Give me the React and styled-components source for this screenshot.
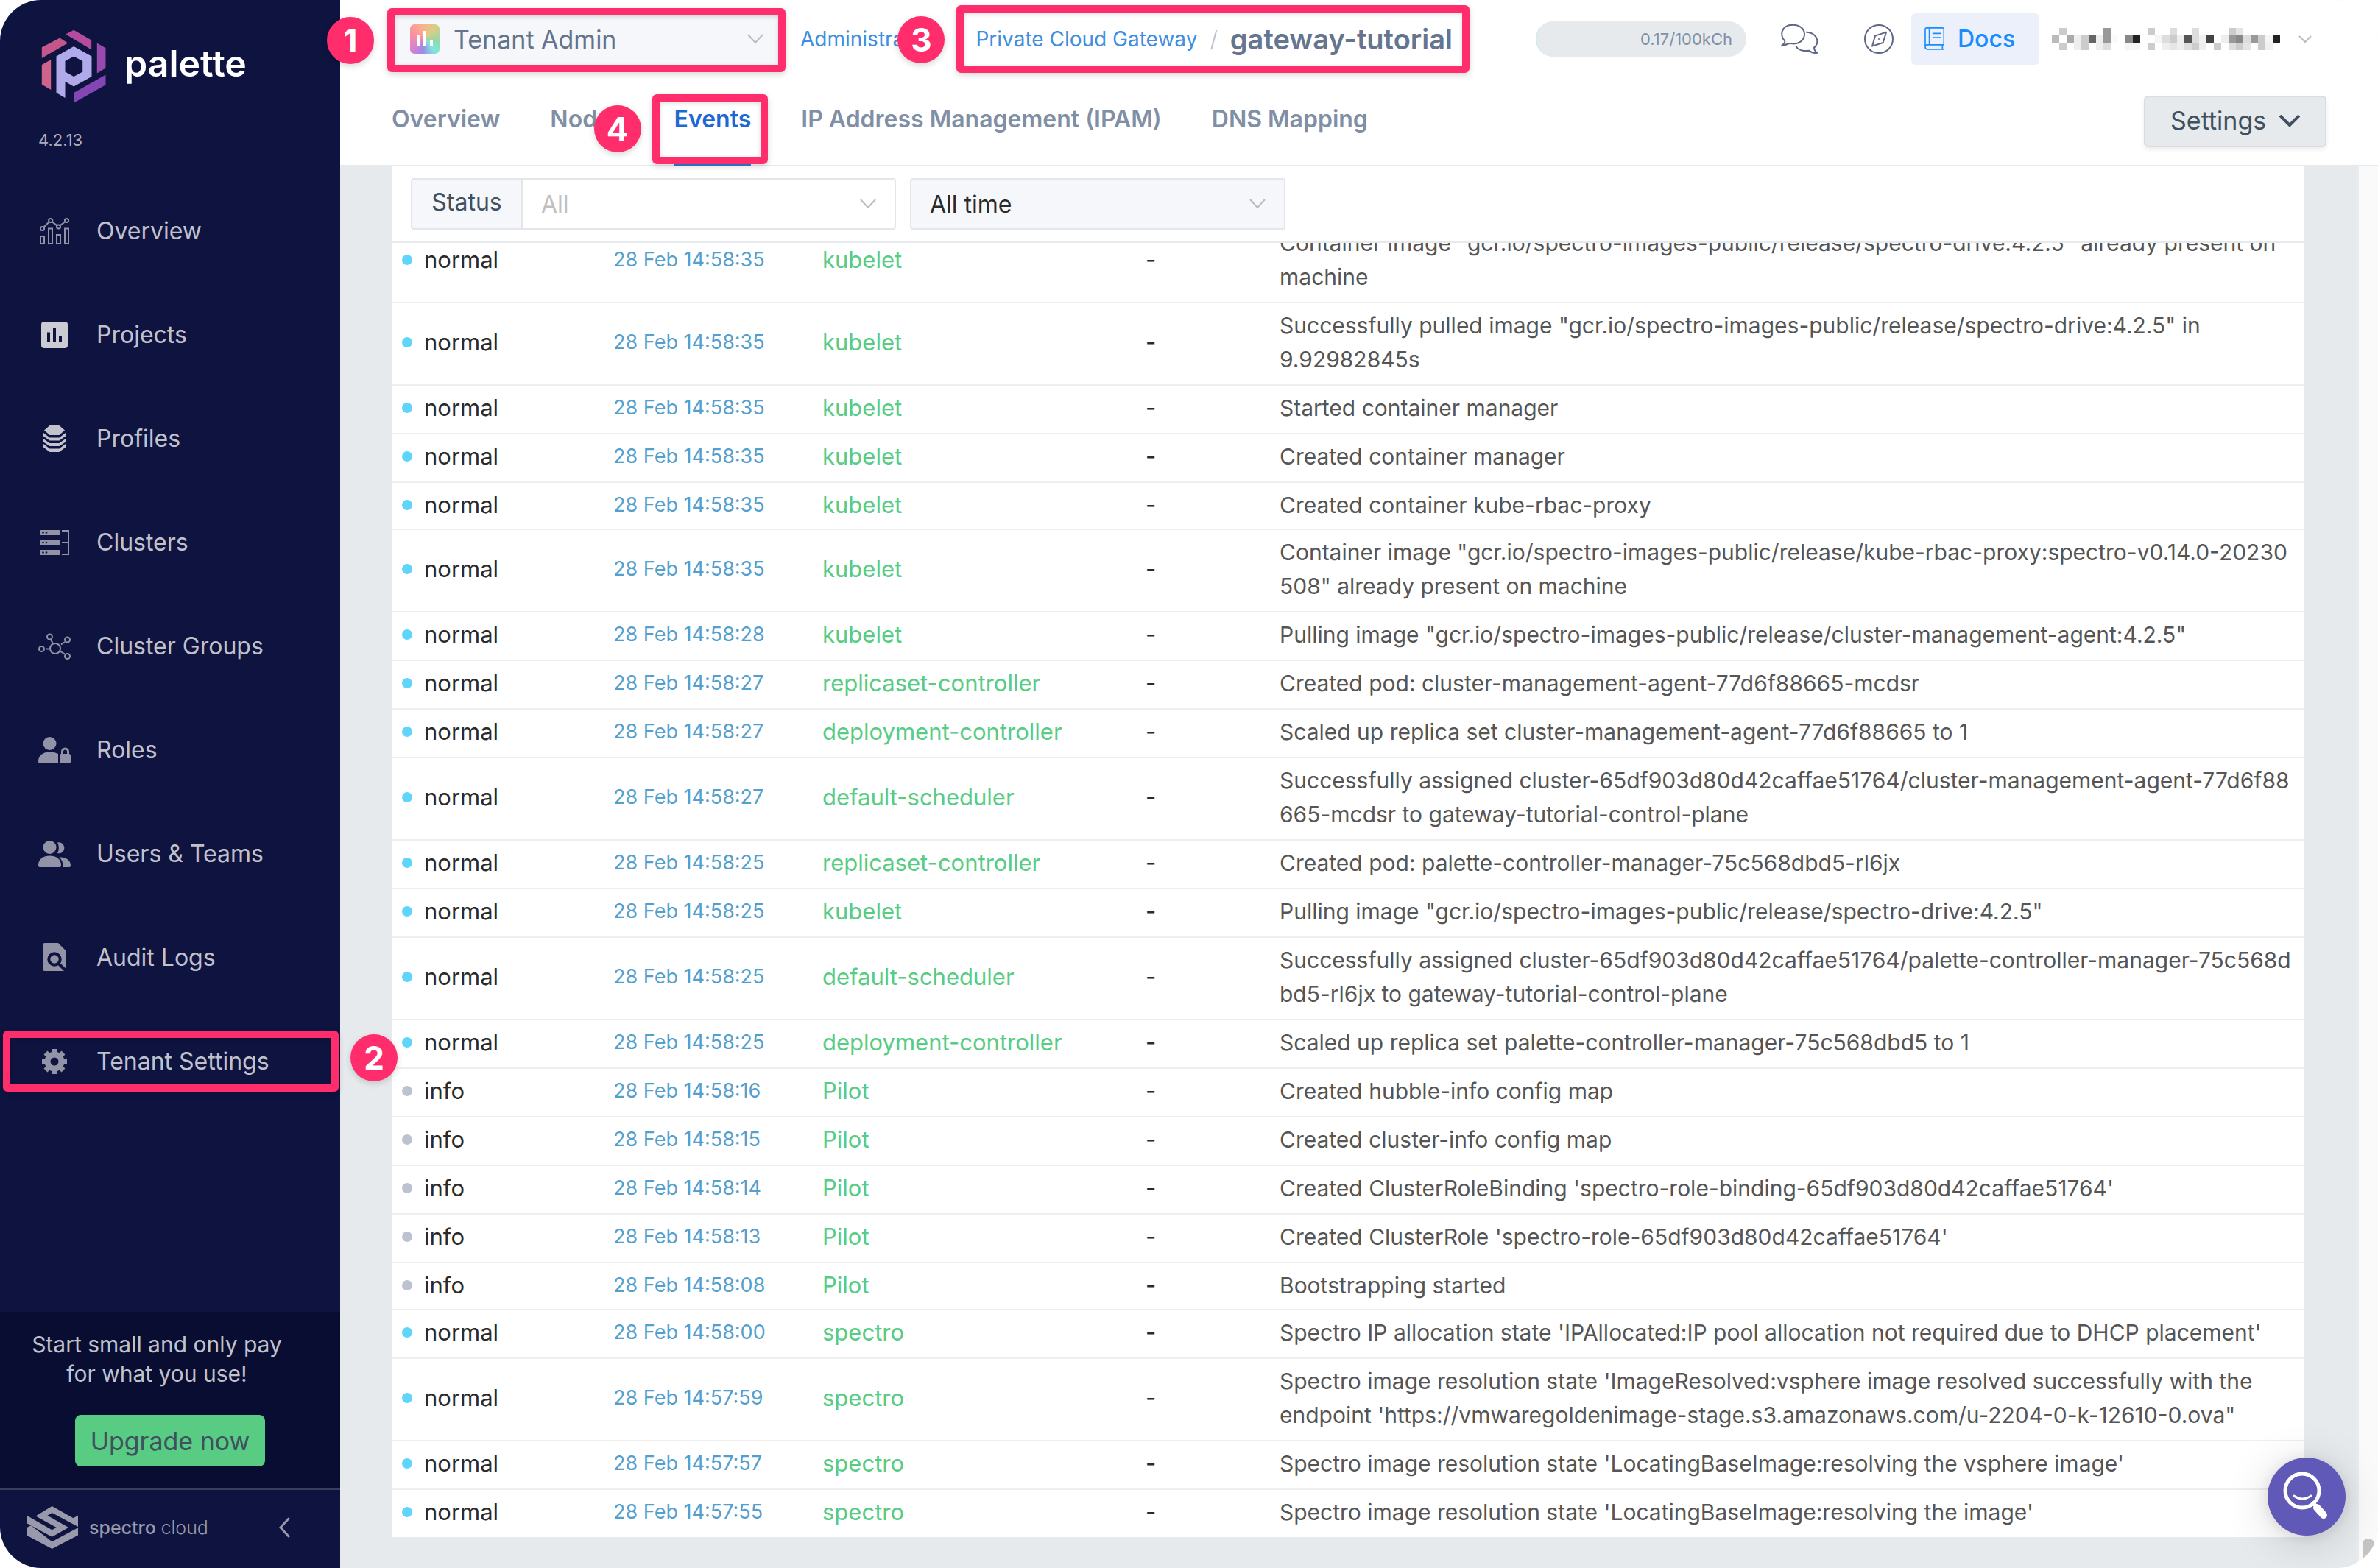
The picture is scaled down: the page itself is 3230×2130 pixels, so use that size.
import React from "react";
import styled, { createGlobalStyle, css } from "styled-components";

const color = {
  navy: "#0e1340",
  navyDark: "#090d31",
  canvas: "#e6eaed",
  line: "#e6eaed",
  rowLine: "#efefef",
  link: "#3f8ee0",
  pink: "#ff2d6b",
  muted: "#808fa5",
  field: "#f6f7fa",
};

const Global = createGlobalStyle`
  *, *::before, *::after { box-sizing: border-box; }
  body { margin: 0; background: #fff; font-family: Inter, "Open Sans", sans-serif; }
  button, select { font-family: inherit; }
  a { text-decoration: none; }
  svg { display: block; flex: none; }
`;

const Shell = styled.div`
  display: flex;
  min-height: 100vh;
  border-radius: 56px;
  overflow: hidden;
  background: ${color.canvas};
`;

/* ---------- annotations ---------- */

const Frame = styled.span`
  position: absolute;
  inset: ${(p) => p.$inset};
  border: 10px solid ${color.pink};
  border-radius: 6px;
  box-shadow: 0 3px 8px rgba(0, 0, 0, 0.16), inset 0 2px 6px rgba(0, 0, 0, 0.14);
  pointer-events: none;
  z-index: 2;
`;

const Badge = styled.span`
  position: absolute;
  top: ${(p) => p.$top};
  left: ${(p) => p.$left};
  width: 64px;
  height: 64px;
  border-radius: 50%;
  background: ${color.pink};
  color: #fff;
  font-size: 44px;
  font-weight: 700;
  line-height: 64px;
  text-align: center;
  box-shadow: 0 3px 8px rgba(0, 0, 0, 0.16);
  z-index: 3;
`;

/* ---------- sidebar ---------- */

const Sidebar = styled.aside`
  position: relative;
  z-index: 1;
  display: flex;
  flex-direction: column;
  flex: none;
  width: 462px;
  background: ${color.navy};
`;

const Brand = styled.div`
  display: flex;
  align-items: flex-start;
  gap: 25px;
  padding: 40px 0 0 56px;
  color: #fff;
  font-size: 50px;
  font-weight: 600;
  line-height: 92px;
`;

const Version = styled.div`
  padding: 30px 0 0 52px;
  color: #aeaebb;
  font-size: 22px;
  line-height: 40px;
`;

const Nav = styled.nav`
  display: flex;
  flex-direction: column;
  padding-top: 33px;
`;

const NavItem = styled.a`
  position: relative;
  display: flex;
  align-items: center;
  gap: 35px;
  height: 141px;
  padding-left: 52px;
  color: #c1c1cc;
  font-size: 32px;
`;

const Promo = styled.div`
  display: flex;
  flex-direction: column;
  align-items: center;
  margin-top: auto;
  padding: 24px 0 30px;
  background: ${color.navyDark};
  color: #c0c2cc;
`;

const PromoText = styled.p`
  margin: 0 36px 36px 0;
  font-size: 30px;
  line-height: 40px;
  text-align: center;
`;

const UpgradeButton = styled.button`
  width: 258px;
  height: 70px;
  padding: 0;
  border: 0;
  border-radius: 8px;
  background: #57cc82;
  color: #40505f;
  font-size: 34px;
`;

const SidebarFoot = styled.div`
  display: flex;
  align-items: center;
  height: 108px;
  padding: 0 68px 4px 36px;
  border-top: 2px solid #3c3e60;
  color: #9899ab;
  font-size: 25px;
`;

const FootName = styled.span`
  margin-left: 15px;
  font-weight: 500;
  span {
    font-weight: 300;
  }
`;

const IconButton = styled.button`
  display: flex;
  padding: 0;
  border: 0;
  background: none;
  color: inherit;
  margin-left: ${(p) => p.$push || "0"};
`;

/* ---------- page ---------- */

const Page = styled.div`
  display: flex;
  flex-direction: column;
  flex: 1;
  min-width: 0;
`;

const Header = styled.header`
  border-bottom: 2px solid ${color.line};
  background: #fff;
`;

const TopRow = styled.div`
  display: flex;
  align-items: center;
  height: 106px;
  padding: 0 70px;
`;

const Field = styled.label`
  position: relative;
  display: flex;
  align-items: center;
  width: ${(p) => p.$width};
  height: 70px;
  padding: 0 25px;
  border: ${(p) => (p.$flat ? "0" : "2px solid #e3e7ea")};
  border-radius: ${(p) => (p.$joined ? "0 4px 4px 0" : "4px")};
  border-left-width: ${(p) => (p.$joined ? "0" : "")};
  background: ${(p) => (p.$filled ? color.field : "#fff")};
`;

const Select = styled.select`
  flex: 1;
  min-width: 0;
  height: 100%;
  padding: 0 0 0 ${(p) => p.$indent || "0"};
  border: 0;
  outline: 0;
  background: none;
  appearance: none;
  color: ${(p) => p.$color};
  font-size: ${(p) => p.$size || "32px"};
`;

const TenantMark = styled.span`
  width: 40px;
  height: 40px;
  border-radius: 6px;
  background: conic-gradient(
    #f3b98c, #d6cf85 45deg, #93d8ac 100deg, #80e6dd 140deg,
    #9a8ae8 190deg, #d583cf 230deg, #f98fa5 290deg, #ff9f95 320deg, #f3b98c
  );
`;

const Crumbs = styled.nav`
  display: flex;
  align-items: center;
  gap: 17px;
  margin-left: 25px;
  color: #b9bfca;
  font-size: 30px;
  font-weight: 300;
`;

const CrumbLink = styled.a`
  width: ${(p) => p.$width || "auto"};
  color: ${color.link};
  font-size: 28px;
  font-weight: 400;
`;

const CrumbGroup = styled.span`
  position: relative;
  display: flex;
  align-items: center;
  gap: 17px;
`;

const CrumbHere = styled.h1`
  margin: 0;
  color: #65758f;
  font-size: 38px;
  font-weight: 600;
  line-height: 64px;
`;

const Tools = styled.div`
  display: flex;
  align-items: center;
  margin-left: auto;
  padding-right: 20px;
  color: #5f6685;
`;

const Usage = styled.div`
  width: 286px;
  height: 48px;
  margin-right: 46px;
  padding-right: 19px;
  border-radius: 24px;
  border-left: 1px solid #b9ecd8;
  background: ${color.canvas};
  color: ${color.muted};
  font-size: 22px;
  line-height: 48px;
  text-align: right;
`;

const DocsLink = styled.a`
  display: flex;
  align-items: center;
  gap: 18px;
  width: 174px;
  height: 70px;
  margin: 0 17px 0 24px;
  padding: 0 0 2px 18px;
  border-radius: 6px;
  background: #ecf0fa;
  color: #1a8cff;
  font-size: 32px;
  font-weight: 500;
`;

const TabRow = styled.div`
  display: flex;
  justify-content: space-between;
  padding: 24px 70px 0;
`;

const Tabs = styled.nav`
  display: flex;
  gap: 68px;
`;

const Tab = styled.a`
  position: relative;
  height: 94px;
  color: ${(p) => (p.$active ? "#1d68d4" : color.muted)};
  font-size: 32px;
  font-weight: 600;
  line-height: 64px;
  ${(p) =>
    p.$active &&
    css`
      &::after {
        content: "";
        position: absolute;
        inset: auto 0 -2px;
        height: 4px;
        background: #2b7de0;
      }
    `}
`;

const SettingsButton = styled.button`
  display: flex;
  align-items: center;
  justify-content: space-between;
  width: 248px;
  height: 70px;
  padding: 0 34px 3px;
  border: 2px solid #d9dde1;
  border-radius: 6px;
  background: ${color.canvas};
  box-shadow: 0 3px 6px rgba(0, 0, 0, 0.08);
  color: #40505f;
  font-size: 34px;
`;

const Body = styled.div`
  display: flex;
  flex: 1;
`;

const Content = styled.main`
  flex: 1;
  min-width: 0;
  padding: 0 72px 42px 70px;
`;

const Track = styled.div`
  display: flex;
  flex-direction: column;
  align-items: center;
  justify-content: flex-end;
  width: 28px;
  border-left: 2px solid #ececec;
  background: #fafafa;
`;

const Thumb = styled.div`
  width: 16px;
  height: 40px;
  border-radius: 8px 8px 0 0;
  background: #c4c4c4;
`;

const Card = styled.section`
  background: #fff;
`;

const Filters = styled.div`
  display: flex;
  gap: 19px;
  padding: 16px 26px;
  border-bottom: 2px solid ${color.line};
`;

const FieldGroup = styled.div`
  display: flex;
`;

const Addon = styled.label`
  width: 152px;
  height: 70px;
  border: 2px solid #e3e7ea;
  border-radius: 4px 0 0 4px;
  background: ${color.field};
  color: #40505f;
  font-size: 32px;
  line-height: 62px;
  text-align: center;
`;

const Scroller = styled.div`
  overflow: hidden;
`;

const Table = styled.table`
  width: 100%;
  margin-top: -30px;
  border-collapse: separate;
  border-spacing: 0;
  table-layout: fixed;
`;

const Col = styled.col`
  width: ${(p) => p.$width};
`;

const Cell = styled.td`
  padding: 7px 0 ${(p) => (p.$short ? "9px" : "11px")} 16px;
  border-bottom: ${(p) => (p.$last ? "0" : `2px solid ${color.rowLine}`)};
  color: ${(p) => p.$color};
  font-size: ${(p) => p.$size || "31px"};
  line-height: 46px;
  vertical-align: middle;
  white-space: nowrap;
`;

const Status = styled.span`
  display: flex;
  align-items: center;
  gap: 16px;
  margin-left: -2px;
  &::before {
    content: "";
    width: 14px;
    height: 14px;
    border-radius: 50%;
    background: ${(p) => (p.$info ? "#bcc2cf" : "#5fd5fb")};
  }
`;

const HelpButton = styled.button`
  position: fixed;
  right: 44px;
  bottom: 44px;
  width: 106px;
  height: 106px;
  padding: 0;
  border: 0;
  border-radius: 50%;
  background: #6059b7;
  box-shadow: 0 8px 60px rgba(0, 0, 0, 0.16), 0 2px 20px rgba(0, 0, 0, 0.1);
`;

/* ---------- drawings ---------- */

const Chevron = ({ w = 22, h = 14, stroke = "#b8bcc2", sw = 2 }) => (
  <svg width={w} height={h} viewBox={`0 0 ${w} ${h}`} fill="none" stroke={stroke} strokeWidth={sw}>
    <path d={`M1 1 L${w / 2} ${h - 2} L${w - 1} 1`} />
  </svg>
);

const PaletteLogo = () => (
  <svg width="88" height="100" viewBox="56.5 39.5 88 100">
    <path fill="#c4568c" d="M57.3 63.8 81.7 51 92.7 58 57.3 78.6Z" />
    <path fill="#cf648b" d="M57.3 87.5 69.7 80.4V121.4L57.3 114.3Z" />
    <path fill="#b34b9f" d="M89.7 46 100.7 40.2 124.7 54V67Z" />
    <path fill="#984bae" d="M132.3 58 144 64.7V92L132.3 99Z" />
    <path fill="#8445b5" d="M100.7 125.4 144 101V114.7L100.7 139.3Z" />
    <path
      fill="#b0aaea"
      fillRule="evenodd"
      d="M77 76 100.7 62.5 125 76V103.6L100.7 117 89 110.3V132.6L77 125.4ZM89 82.6V97L100.7 103.6 112.7 97V82.6L100.7 76Z"
    />
  </svg>
);

const SpectroLogo = () => (
  <svg width="70" height="58" viewBox="101 926 196 172" preserveAspectRatio="none" fill="currentColor">
    <path d="M136 966 198 926 279 974 297 963V1009L198 953 181 964 261 1012 198 1050 101 994V963L198 1022 215 1012Z" />
    <path d="M101 1013 118 1004 198 1069 297 1013V1043L198 1098 101 1043Z" />
  </svg>
);

const iconPaths = {
  overview: (
    <g fill="none" stroke="#9293a6" strokeWidth="2">
      <path d="M3 29h5v10H3zM14 18.500h5V39h-5zM25 27h5v12h-5zM36 18.500h5V39h-5z" />
      <circle cx="5.500" cy="18.500" r="2.600" />
      <circle cx="16.700" cy="7.500" r="2.600" />
      <circle cx="27.500" cy="16" r="2.600" />
      <circle cx="38.500" cy="7.500" r="2.600" />
      <path d="M7.500 16.500 14.700 9.500M18.700 9.200 25.500 14.400M29.600 14.300 36.300 9.200" />
    </g>
  ),
  projects: (
    <>
      <rect x="4" y="4" width="36" height="36" rx="4" fill="#cbcbd4" />
      <path fill={color.navy} d="M12 18.500h4V32h-4zM20 12.500h4V32h-4zM28 24h4v8h-4z" />
    </>
  ),
  profiles: (
    <g fill="#c3c3cd">
      <path d="M15.500 4h13l7.500 6.500-7.500 6.500h-13L8 10.500z" />
      <path d="M7 14l8.500 6.500h13L37 14v4.500L28.500 24.500h-13L7 18.500z" />
      <path d="M7 22l8.500 6h13L37 22v4.500L28.500 32h-13L7 26.500z" />
      <path d="M7 29l8.500 6.500h13L37 29v4.500L28.500 40h-13L7 33.500z" />
    </g>
  ),
  clusters: (
    <>
      <g fill="#9293a6">
        <rect x="2" y="5" width="28" height="7" rx="1.500" />
        <rect x="2" y="18.500" width="28" height="7" rx="1.500" />
        <rect x="2" y="32" width="28" height="7" rx="1.500" />
      </g>
      <path fill="none" stroke="#9293a6" strokeWidth="2" d="M32 6h9v32h-9M32 22h9" />
      <g fill={color.navy}>
        {[8.5, 22, 35.5].map((y) => (
          <React.Fragment key={y}>
            <circle cx="6.500" cy={y} r="1.300" />
            <circle cx="11" cy={y} r="1.300" />
          </React.Fragment>
        ))}
      </g>
    </>
  ),
  groups: (
    <g fill="none" stroke="#9293a6" strokeWidth="2">
      <circle cx="23" cy="25" r="7" />
      <circle cx="4.500" cy="25.500" r="3.500" />
      <circle cx="15.500" cy="9" r="3.500" />
      <circle cx="39.500" cy="13" r="3.500" />
      <circle cx="39.500" cy="35.500" r="3.500" />
      <path d="M10 25.500h5M17 12.500l2.800 6M31 19.500l5-3.500M29.300 28.500l6.700 4" />
    </g>
  ),
  roles: (
    <g fill="#9293a6">
      <circle cx="15.500" cy="13" r="9" />
      <path d="M0 37c0-8 7-12.500 15.500-12.500 4.500 0 8 .8 11.500 2.500v13H2q-2 0-2-3z" />
      <path
        fillRule="evenodd"
        d="M31 27v-3a5.500 5.500 0 0 1 11 0v3q2 .3 2 2v9q0 2-2 2H31q-2 0-2-2v-9q0-1.700 2-2zM34 27h5v-3a2.500 2.500 0 0 0-5 0z"
      />
    </g>
  ),
  users: (
    <g fill="#9293a6">
      <circle cx="15.500" cy="13" r="9" />
      <path d="M26 6.500a7.500 7.500 0 1 1 0 14.500c2.500-4.500 2.500-10 0-14.500z" />
      <path d="M0 37c0-8 7-12.500 15.500-12.500S31 29 31 37q0 3-2 3H2q-2 0-2-3z" />
      <path d="M28.500 26.500C38 25.500 44 31 44 37.500q0 2.500-2 2.500h-9c1-6-1-10-4.500-13.500z" />
    </g>
  ),
  audit: (
    <>
      <path fill="#9293a6" d="M9 2h18l11 11v25l0 2H9q-3 0-3-3V5q0-3 3-3z" />
      <circle cx="22" cy="24" r="7.700" fill="none" stroke={color.navy} strokeWidth="4" />
      <path stroke={color.navy} strokeWidth="4" d="M27 29.500 39 41" />
    </>
  ),
  settings: (
    <g fill="none" stroke="#9293a6">
      <circle cx="22" cy="22" r="9.500" strokeWidth="8" />
      <path strokeWidth="7" d="M22 5v6M22 33v6M5 22h6M33 22h6M10 10l4.500 4.500M29.500 29.500 34 34M34 10l-4.500 4.500M14.500 29.500 10 34" />
    </g>
  ),
};

const NavIcon = ({ name }) => (
  <svg width="44" height="44" viewBox="0 0 44 44" aria-hidden="true">
    {iconPaths[name]}
  </svg>
);

const ChatIcon = () => (
  <svg width="52" height="42" viewBox="50 93 156 126" fill="none" stroke="currentColor" strokeWidth="6" strokeLinejoin="round">
    <path d="M56 183C66 176 72 170 68 163 50 148 48 98 102 98 130 98 149 115 149 136 149 160 128 177 102 175 95 174 85 173 80 176 72 182 62 183 56 183Z" />
    <path d="M156 128C185 128 201 148 201 165 201 175 196 185 188 191 188 200 192 206 201 212 190 214 178 212 168 203 140 207 122 198 114 185" />
  </svg>
);

const CompassIcon = () => (
  <svg width="40" height="40" viewBox="395 95 120 120" fill="none" stroke="currentColor" strokeWidth="6" strokeLinejoin="round">
    <circle cx="455" cy="155" r="57" />
    <path d="M440 142 485 127 472 170 428 184Z" />
    <circle cx="455" cy="155" r="3" fill="currentColor" stroke="none" />
  </svg>
);

const BookIcon = () => (
  <svg width="27" height="31" viewBox="641 114 82 93" fill="none" stroke="currentColor" strokeWidth="5">
    <path d="M644 196V122q0-6 6-6h65q6 0 6 6V186H652q-8 0-8 9t8 9h70M661 116v70M674 139h34M674 156h34M715 186v17" />
  </svg>
);

const TenantBars = () => (
  <svg width="40" height="40" viewBox="0 0 40 40" fill="#fff">
    <rect x="9" y="15" width="4" height="15" />
    <rect x="18" y="9" width="4" height="21" />
    <rect x="27" y="22" width="4" height="8" />
  </svg>
);

const maskRows = [
  { 1: "#ccc", 7: "#999", 13: "#ccc", 16: "#ddd", 19: "#ddd", 24: "#ccc", 25: "#e4e4e4" },
  {
    0: "#bbb", 2: "#aaa", 3: "#eee", 4: "#ccc", 5: "#666", 6: "#eee", 7: "#999", 8: "#fafafa", 10: "#888", 11: "#222",
    14: "#f5f5f5", 15: "#ddd", 16: "#ccc", 17: "#eee", 18: "#555", 19: "#ddd", 20: "#f0f0f0", 21: "#444", 23: "#eee",
    24: "#999", 25: "#888", 26: "#ddd", 27: "#999", 28: "#ccc", 29: "#f5f5f5", 30: "#222",
  },
  {
    1: "#ccc", 3: "#eee", 4: "#ccc", 6: "#eee", 7: "#ddd", 10: "#f5f5f5", 11: "#f5f5f5", 13: "#ccc", 15: "#eee",
    16: "#e6e6e6", 17: "#eee", 18: "#ddd", 19: "#ccc", 20: "#eee", 22: "#ccc", 24: "#ddd", 25: "#ccc", 26: "#e4e4e4",
    28: "#ccc", 29: "#f0f0f0",
  },
];

const MaskedName = () => (
  <svg width="310" height="30" viewBox="0 0 310 30" role="img" aria-label="Account" shapeRendering="crispEdges">
    {maskRows.map((row, y) =>
      Object.entries(row).map(([x, fill]) => (
        <rect key={`${x}-${y}`} x={x * 10} y={y * 10} width="10" height="10" fill={fill} />
      ))
    )}
  </svg>
);

const HelpIcon = () => (
  <svg width="106" height="106" viewBox="0 0 106 106" fill="none" stroke="#fff" strokeLinecap="round">
    <circle cx="47" cy="45" r="23" strokeWidth="5" />
    <path strokeWidth="3" d="M36 52q11 8 23 0" />
    <path strokeWidth="5" d="M62 62l4 4" />
    <path strokeWidth="10" d="M67 68l9 10" />
  </svg>
);

/* ---------- data ---------- */

const navItems = [
  ["overview", "Overview"],
  ["projects", "Projects"],
  ["profiles", "Profiles"],
  ["clusters", "Clusters"],
  ["groups", "Cluster Groups"],
  ["roles", "Roles"],
  ["users", "Users & Teams"],
  ["audit", "Audit Logs"],
  ["settings", "Tenant Settings"],
];

const events = [
  ["normal", "14:58:35", "kubelet", ['Container image "gcr.io/spectro-images-public/release/spectro-drive:4.2.5" already present on', "machine"]],
  ["normal", "14:58:35", "kubelet", ['Successfully pulled image "gcr.io/spectro-images-public/release/spectro-drive:4.2.5" in', "9.92982845s"]],
  ["normal", "14:58:35", "kubelet", ["Started container manager"]],
  ["normal", "14:58:35", "kubelet", ["Created container manager"]],
  ["normal", "14:58:35", "kubelet", ["Created container kube-rbac-proxy"], true],
  ["normal", "14:58:35", "kubelet", ['Container image "gcr.io/spectro-images-public/release/kube-rbac-proxy:spectro-v0.14.0-20230', '508" already present on machine']],
  ["normal", "14:58:28", "kubelet", ['Pulling image "gcr.io/spectro-images-public/release/cluster-management-agent:4.2.5"']],
  ["normal", "14:58:27", "replicaset-controller", ["Created pod: cluster-management-agent-77d6f88665-mcdsr"]],
  ["normal", "14:58:27", "deployment-controller", ["Scaled up replica set cluster-management-agent-77d6f88665 to 1"]],
  ["normal", "14:58:27", "default-scheduler", ["Successfully assigned cluster-65df903d80d42caffae51764/cluster-management-agent-77d6f88", "665-mcdsr to gateway-tutorial-control-plane"]],
  ["normal", "14:58:25", "replicaset-controller", ["Created pod: palette-controller-manager-75c568dbd5-rl6jx"]],
  ["normal", "14:58:25", "kubelet", ['Pulling image "gcr.io/spectro-images-public/release/spectro-drive:4.2.5"']],
  ["normal", "14:58:25", "default-scheduler", ["Successfully assigned cluster-65df903d80d42caffae51764/palette-controller-manager-75c568d", "bd5-rl6jx to gateway-tutorial-control-plane"]],
  ["normal", "14:58:25", "deployment-controller", ["Scaled up replica set palette-controller-manager-75c568dbd5 to 1"]],
  ["info", "14:58:16", "Pilot", ["Created hubble-info config map"]],
  ["info", "14:58:15", "Pilot", ["Created cluster-info config map"]],
  ["info", "14:58:14", "Pilot", ["Created ClusterRoleBinding 'spectro-role-binding-65df903d80d42caffae51764'"]],
  ["info", "14:58:13", "Pilot", ["Created ClusterRole 'spectro-role-65df903d80d42caffae51764'"]],
  ["info", "14:58:08", "Pilot", ["Bootstrapping started"], true],
  ["normal", "14:58:00", "spectro", ["Spectro IP allocation state 'IPAllocated:IP pool allocation not required due to DHCP placement'"]],
  ["normal", "14:57:59", "spectro", ["Spectro image resolution state 'ImageResolved:vsphere image resolved successfully with the", "endpoint 'https://vmwaregoldenimage-stage.s3.amazonaws.com/u-2204-0-k-12610-0.ova\""]],
  ["normal", "14:57:57", "spectro", ["Spectro image resolution state 'LocatingBaseImage:resolving the vsphere image'"]],
  ["normal", "14:57:55", "spectro", ["Spectro image resolution state 'LocatingBaseImage:resolving the image'"]],
];

function EventRow({ event, last }) {
  const [type, time, source, lines, short] = event;
  const shared = { $short: short, $last: last };
  return (
    <tr>
      <Cell {...shared} $color="#2a2a2a">
        <Status $info={type === "info"}>{type}</Status>
      </Cell>
      <Cell {...shared} $color="#549fcd" $size="27px">28 Feb {time}</Cell>
      <Cell {...shared} $color="#57cc82">{source}</Cell>
      <Cell {...shared} $color="#2a2a2a">-</Cell>
      <Cell {...shared} $color="#555" $size="30px">
        {lines.map((line, i) => (
          <React.Fragment key={line}>
            {i > 0 && <br />}
            {line}
          </React.Fragment>
        ))}
      </Cell>
    </tr>
  );
}

export default function App() {
  return (
    <Shell>
      <Global />
      <Sidebar>
        <Brand>
          <PaletteLogo />
          palette
        </Brand>
        <Version>4.2.13</Version>
        <Nav>
          {navItems.map(([icon, label]) => (
            <NavItem href="#" key={icon}>
              <NavIcon name={icon} />
              {label}
              {icon === "settings" && (
                <>
                  <Frame $inset="29px 2px 29px 4px" />
                  <Badge $top="34px" $left="476px">2</Badge>
                </>
              )}
            </NavItem>
          ))}
        </Nav>
        <Promo>
          <PromoText>
            Start small and only pay
            <br />
            for what you use!
          </PromoText>
          <UpgradeButton>Upgrade now</UpgradeButton>
        </Promo>
        <SidebarFoot>
          <SpectroLogo />
          <FootName>
            spectro <span>cloud</span>
          </FootName>
          <IconButton $push="auto" aria-label="Collapse sidebar">
            <svg width="16" height="28" viewBox="0 0 16 28" fill="none" stroke="currentColor" strokeWidth="3" strokeLinecap="round">
              <path d="M14 2 3 14l11 12" />
            </svg>
          </IconButton>
        </SidebarFoot>
      </Sidebar>

      <Page>
        <Header>
          <TopRow>
            <Field $width="530px" $flat $filled>
              <TenantMark>
                <TenantBars />
              </TenantMark>
              <Select aria-label="Scope" $color="#63738b" $indent="19px" $size="34px">
                <option>Tenant Admin</option>
              </Select>
              <Chevron />
              <Frame $inset="-7px -5px -10px -6px" />
              <Badge $top="5px" $left="-88px">1</Badge>
            </Field>
            <Crumbs aria-label="Breadcrumb">
              <CrumbLink href="#" $width="194px">Administration</CrumbLink>
              /
              <CrumbGroup>
                <CrumbLink href="#">Private Cloud Gateway</CrumbLink>
                /
                <CrumbHere>gateway-tutorial</CrumbHere>
                <Frame $inset="-14px -23px -14px -26px" />
                <Badge $top="1px" $left="-106px">3</Badge>
              </CrumbGroup>
            </Crumbs>
            <Tools>
              <Usage>0.17/100kCh</Usage>
              <IconButton aria-label="Chat">
                <ChatIcon />
              </IconButton>
              <IconButton aria-label="Explore" $push="62px">
                <CompassIcon />
              </IconButton>
              <DocsLink href="#">
                <BookIcon />
                Docs
              </DocsLink>
              <MaskedName />
              <IconButton aria-label="Account menu" $push="25px">
                <Chevron w={18} h={11} />
              </IconButton>
            </Tools>
          </TopRow>
          <TabRow>
            <Tabs>
              <Tab href="#">Overview</Tab>
              <Tab href="#">Nodes</Tab>
              <Tab href="#" $active>
                Events
                <Frame $inset="-2px -23px 1px -30px" />
                <Badge $top="13px" $left="-109px">4</Badge>
              </Tab>
              <Tab href="#">IP Address Management (IPAM)</Tab>
              <Tab href="#">DNS Mapping</Tab>
            </Tabs>
            <SettingsButton>
              Settings
              <Chevron w={28} h={16} stroke="#40505f" sw={4} />
            </SettingsButton>
          </TabRow>
        </Header>
        <Body>
          <Content>
            <Card>
              <Filters>
                <FieldGroup>
                  <Addon htmlFor="status">Status</Addon>
                  <Field $width="507px" $joined>
                    <Select id="status" $color="#bfbfbf">
                      <option>All</option>
                    </Select>
                    <Chevron />
                  </Field>
                </FieldGroup>
                <Field $width="510px" $filled>
                  <Select aria-label="Time range" $color="#2a2a2a">
                    <option>All time</option>
                  </Select>
                  <Chevron />
                </Field>
              </Filters>
              <Scroller>
                <Table>
                  <colgroup>
                    <Col $width="285px" />
                    <Col $width="284px" />
                    <Col $width="439px" />
                    <Col $width="182px" />
                    <Col />
                  </colgroup>
                  <tbody>
                    {events.map((event, i) => (
                      <EventRow key={i} event={event} last={i === events.length - 1} />
                    ))}
                  </tbody>
                </Table>
              </Scroller>
            </Card>
          </Content>
          <Track>
            <Thumb />
          </Track>
        </Body>
      </Page>
      <HelpButton aria-label="Help">
        <HelpIcon />
      </HelpButton>
    </Shell>
  );
}
